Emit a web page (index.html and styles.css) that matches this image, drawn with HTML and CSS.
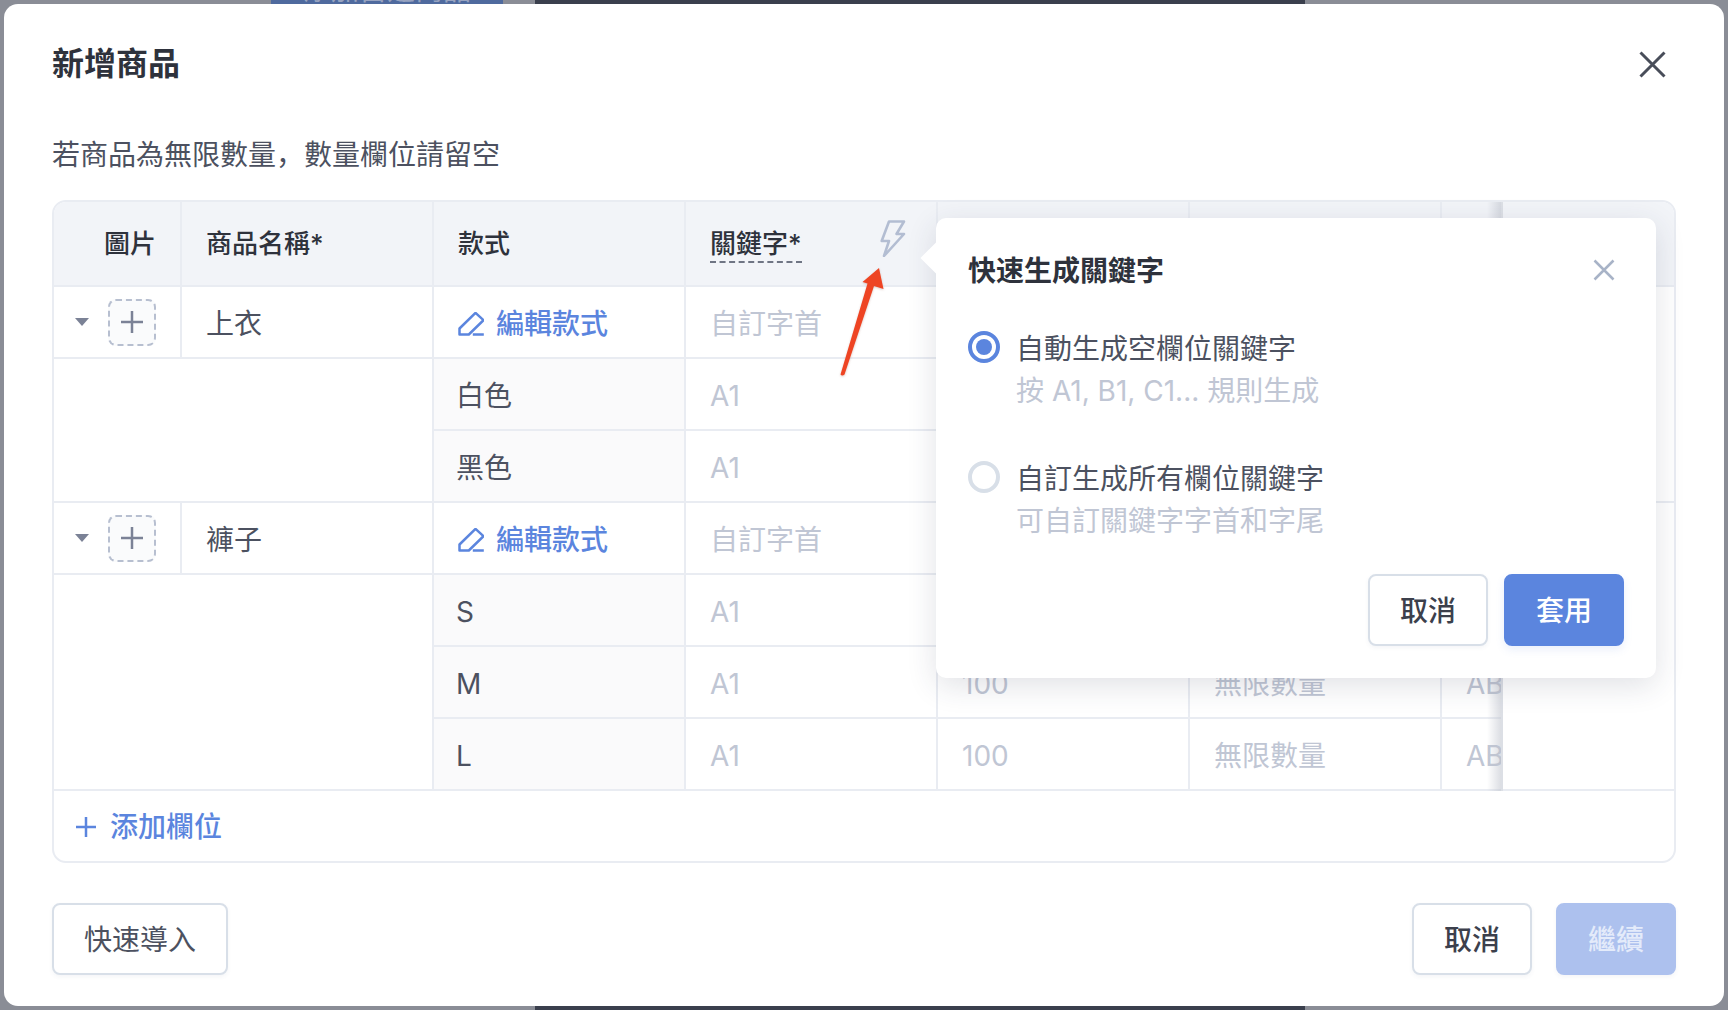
FILE: index.html
```html
<!DOCTYPE html>
<html lang="zh">
<head>
    <meta charset="UTF-8">
    <meta name="viewport" content="width=device-width, initial-scale=1.0">
    <title>新增商品</title>
    <link rel="stylesheet" href="styles.css">
</head>
<body>
    <div class="strip">
        <span class="strip-gray strip-gray-a"></span>
        <span class="strip-blue"><span class="strip-label">添加自選商品</span></span>
        <span class="strip-gray strip-gray-b"></span>
        <span class="strip-dark"></span>
        <span class="strip-gray strip-gray-c"></span>
    </div>

    <div class="page">
        <div class="modal">
            <div class="modal-head">
                <h1>新增商品</h1>
                <svg class="modal-close" viewBox="0 0 27 27"><path d="M1.5 1.5l24 24M25.5 1.5l-24 24"/></svg>
            </div>
            <p class="modal-tip">若商品為無限數量，數量欄位請留空</p>

            <div class="sheet">
                <div class="sheet-body">
                    <div class="sheet-scroll">
                        <table>
                            <colgroup>
                                <col class="col-pic">
                                <col span="6" class="col-std">
                            </colgroup>
                            <thead>
                                <tr>
                                    <th class="th-pic">圖片</th>
                                    <th>商品名稱*</th>
                                    <th>款式</th>
                                    <th>
                                        <div class="th-keyword">
                                            <span class="dashed">關鍵字*</span>
                                            <svg class="bolt" viewBox="0 0 26 38"><path d="M9 2.5h15l-7.5 12.500h7.500l-20 22 5-15h-7.300z"/></svg>
                                        </div>
                                    </th>
                                    <th></th>
                                    <th></th>
                                    <th></th>
                                </tr>
                            </thead>
                            <tbody>
                                <tr>
                                    <td>
                                        <div class="pic-cell">
                                            <span class="caret"></span>
                                            <span class="pic-add"><svg viewBox="0 0 24 24"><path d="M12 1v22M1 12h22"/></svg></span>
                                        </div>
                                    </td>
                                    <td>上衣</td>
                                    <td>
                                        <a class="edit-link">
                                            <svg viewBox="0 0 26 24"><path d="M1.500 22.500v-6l16-15.600 8 7.300-14.700 14.300zM14.800 22.500h11"/></svg>
                                            編輯款式
                                        </a>
                                    </td>
                                    <td class="muted">自訂字首</td>
                                    <td></td>
                                    <td></td>
                                    <td></td>
                                </tr>
                                <tr>
                                    <td colspan="2" rowspan="2" class="blank"></td>
                                    <td class="variant">白色</td>
                                    <td class="muted">A1</td>
                                    <td></td>
                                    <td></td>
                                    <td></td>
                                </tr>
                                <tr>
                                    <td class="variant">黑色</td>
                                    <td class="muted">A1</td>
                                    <td></td>
                                    <td></td>
                                    <td></td>
                                </tr>
                                <tr>
                                    <td>
                                        <div class="pic-cell">
                                            <span class="caret"></span>
                                            <span class="pic-add"><svg viewBox="0 0 24 24"><path d="M12 1v22M1 12h22"/></svg></span>
                                        </div>
                                    </td>
                                    <td>褲子</td>
                                    <td>
                                        <a class="edit-link">
                                            <svg viewBox="0 0 26 24"><path d="M1.500 22.500v-6l16-15.600 8 7.300-14.700 14.300zM14.800 22.500h11"/></svg>
                                            編輯款式
                                        </a>
                                    </td>
                                    <td class="muted">自訂字首</td>
                                    <td></td>
                                    <td></td>
                                    <td></td>
                                </tr>
                                <tr>
                                    <td colspan="2" rowspan="3" class="blank"></td>
                                    <td class="variant">S</td>
                                    <td class="muted">A1</td>
                                    <td></td>
                                    <td></td>
                                    <td></td>
                                </tr>
                                <tr>
                                    <td class="variant">M</td>
                                    <td class="muted">A1</td>
                                    <td class="muted">100</td>
                                    <td class="muted">無限數量</td>
                                    <td class="muted">ABC123</td>
                                </tr>
                                <tr>
                                    <td class="variant">L</td>
                                    <td class="muted">A1</td>
                                    <td class="muted">100</td>
                                    <td class="muted">無限數量</td>
                                    <td class="muted">ABC123</td>
                                </tr>
                            </tbody>
                        </table>
                    </div>
                    <div class="sheet-fixed">
                        <div class="fixed-head"></div>
                        <div class="fixed-group fixed-group-a"></div>
                        <div class="fixed-group fixed-group-b"></div>
                    </div>
                </div>
                <a class="add-row">
                    <svg viewBox="0 0 20 20"><path d="M10 0v20M0 10h20"/></svg>
                    添加欄位
                </a>
            </div>

            <div class="modal-foot">
                <button class="btn">快速導入</button>
                <div class="foot-right">
                    <button class="btn btn-small btn-strong">取消</button>
                    <button class="btn btn-small btn-disabled">繼續</button>
                </div>
            </div>

            <!-- 快速生成彈窗 -->
            <div class="popover">
                <div class="popover-head">
                    <h2>快速生成關鍵字</h2>
                    <svg class="popover-close" viewBox="0 0 22 22"><path d="M1.500 1.500l19 19M20.500 1.500l-19 19"/></svg>
                </div>
                <div class="option">
                    <span class="radio radio-on"></span>
                    <div>
                        <div class="option-title">自動生成空欄位關鍵字</div>
                        <div class="option-sub">按 A1, B1, C1... 規則生成</div>
                    </div>
                </div>
                <div class="option">
                    <span class="radio"></span>
                    <div>
                        <div class="option-title">自訂生成所有欄位關鍵字</div>
                        <div class="option-sub">可自訂關鍵字字首和字尾</div>
                    </div>
                </div>
                <div class="popover-foot">
                    <button class="btn btn-small btn-strong">取消</button>
                    <button class="btn btn-small btn-primary">套用</button>
                </div>
            </div>

            <!-- 標註箭頭 -->
            <svg class="callout" viewBox="0 0 60 120">
                <path class="callout-head" d="M41 2l4.500 21-9.500-3-29.500 88.500q-2.500 2-4 0l27-91-5-1.500z"/>
            </svg>
        </div>
    </div>

    <div class="strip">
        <span class="strip-gray strip-gray-a"></span>
        <span class="strip-gray strip-gray-d"></span>
        <span class="strip-gray strip-gray-b"></span>
        <span class="strip-dark"></span>
        <span class="strip-gray strip-gray-c"></span>
    </div>
</body>
</html>
```

FILE: styles.css
```css
:root {
    --primary-color: #5b85de;
    --disabled-color: #adc1ee;
    --text-color: #4c5160;
    --title-color: #2e323c;
    --muted-color: #c0c6d4;
    --line-color: #e9ecf2;
    --button-line: #d8dfe8;
    --head-background: #f2f4f8;
    --backdrop-color: #8a8d96;
}

* {
    box-sizing: border-box;
}

html,
body {
    margin: 0;
    height: 1010px;
    overflow: hidden;
}

body {
    display: flex;
    flex-direction: column;
    background: var(--backdrop-color);
    color: var(--text-color);
    font-family: "Inter", "Noto Sans CJK SC", sans-serif;
    font-size: 28px;
    line-height: 40px;
}

/* 彈窗後面露出的頁面邊緣 */
.strip {
    display: flex;
    flex: none;
    height: 4px;
    overflow: hidden;
}

.strip-gray-a {
    width: 271px;
}

.strip-blue {
    width: 232px;
    background: #4f6a9e;
    text-align: center;
}

.strip-gray-d {
    width: 232px;
}

.strip-label {
    display: block;
    margin-top: -30px;
    color: #97a3c0;
}

.strip-gray-b {
    width: 32px;
}

.strip-dark {
    width: 770px;
    background: #3a3f4d;
}

.strip-gray-c {
    flex: 1;
}

.page {
    flex: 1;
    padding: 0 4px;
}

.modal {
    position: relative;
    height: 1002px;
    padding: 38px 48px 0;
    background: #fff;
    border-radius: 14px;
}

.modal-head {
    display: flex;
    align-items: center;
    justify-content: space-between;
    height: 44px;
}

.modal-head h1 {
    margin: 0;
    color: var(--title-color);
    font-size: 32px;
    font-weight: 600;
    line-height: 44px;
}

.modal-close {
    width: 27px;
    height: 27px;
    margin-right: 10px;
    fill: none;
    stroke: #484d59;
    stroke-width: 3;
}

.modal-tip {
    margin: 49px 0 25px;
    line-height: 40px;
}

/* 商品表格 */
.sheet {
    height: 663px;
    border: 2px solid var(--line-color);
    border-radius: 14px;
    overflow: hidden;
}

.sheet-body {
    display: flex;
    height: 589px;
}

.sheet-scroll {
    position: relative;
    width: 1449px;
    overflow: hidden;
}

.sheet-scroll::after {
    content: '';
    position: absolute;
    top: 0;
    right: 0;
    bottom: 0;
    width: 16px;
    background: linear-gradient(90deg, rgba(190, 194, 204, 0), rgba(190, 194, 204, 0.55) 88%, #dcdfe5 88%);
}

table {
    width: 1640px;
    table-layout: fixed;
    border-collapse: separate;
    border-spacing: 0;
}

.col-pic {
    width: 128px;
}

.col-std {
    width: 252px;
}

th,
td {
    padding: 0 0 0 24px;
    border-right: 2px solid var(--line-color);
    border-bottom: 2px solid var(--line-color);
    text-align: left;
    white-space: nowrap;
    overflow: hidden;
}

th {
    height: 85px;
    background: var(--head-background);
    color: var(--title-color);
    font-size: 26px;
    font-weight: 500;
}

td {
    height: 72px;
    padding-top: 4px;
}

th.th-pic {
    padding-left: 50px;
}

.th-keyword {
    display: flex;
    align-items: flex-start;
    justify-content: space-between;
    padding-right: 30px;
}

.dashed {
    height: 38px;
    border-bottom: 2px dashed #6f7584;
    line-height: 38px;
}

.bolt {
    width: 26px;
    height: 38px;
    margin-top: -6px;
    fill: none;
    stroke: #b3bdd2;
    stroke-width: 2.600;
    stroke-linejoin: round;
}

td.blank {
    padding: 0;
}

td.variant {
    padding-left: 22px;
    background: #fafafb;
}

td.muted {
    color: var(--muted-color);
}

.pic-cell {
    display: flex;
    align-items: center;
    gap: 19px;
    margin: -4px 0 0 -3px;
}

.caret {
    width: 0;
    height: 0;
    border-top: 8px solid #7b8296;
    border-left: 7.500px solid transparent;
    border-right: 7.500px solid transparent;
}

.pic-add {
    display: flex;
    flex: none;
    align-items: center;
    justify-content: center;
    width: 48px;
    height: 47px;
    background: #fafbfc;
    border: 2px dashed #b7bfd0;
    border-radius: 8px;
}

.pic-add svg {
    width: 24px;
    height: 24px;
    fill: none;
    stroke: #7b8296;
    stroke-width: 2.500;
}

.edit-link {
    display: flex;
    align-items: center;
    gap: 12px;
    color: var(--primary-color);
    font-weight: 500;
}

.edit-link svg {
    width: 26px;
    height: 24px;
    fill: none;
    stroke: var(--primary-color);
    stroke-width: 2.500;
    stroke-linejoin: round;
}

.sheet-fixed {
    flex: 1;
}

.fixed-head {
    height: 85px;
    background: var(--head-background);
    border-bottom: 2px solid var(--line-color);
}

.fixed-group {
    border-bottom: 2px solid var(--line-color);
}

.fixed-group-a {
    height: 216px;
}

.fixed-group-b {
    height: 288px;
}

.add-row {
    display: flex;
    align-items: center;
    gap: 14px;
    height: 70px;
    padding: 1px 0 0 22px;
    color: var(--primary-color);
    font-weight: 500;
}

.add-row svg {
    width: 20px;
    height: 20px;
    fill: none;
    stroke: var(--primary-color);
    stroke-width: 2.500;
}

/* 按鈕 */
.modal-foot {
    display: flex;
    justify-content: space-between;
    margin-top: 40px;
}

.foot-right {
    display: flex;
    gap: 24px;
}

.btn {
    width: 176px;
    height: 72px;
    padding: 0 0 3px;
    background: #fff;
    border: 2px solid var(--button-line);
    border-radius: 8px;
    box-shadow: 0 2px 4px rgba(60, 80, 120, 0.06);
    color: var(--text-color);
    font-family: inherit;
    font-size: 28px;
}

.btn-small {
    width: 120px;
}

.btn-strong {
    color: #3c404c;
    font-weight: 500;
}

.btn-primary {
    background: var(--primary-color);
    border-color: var(--primary-color);
    box-shadow: 0 4px 8px rgba(91, 133, 222, 0.12);
    color: #fff;
    font-weight: 500;
}

.btn-disabled {
    background: var(--disabled-color);
    border-color: var(--disabled-color);
    color: #e4ebfa;
    font-weight: 500;
}

/* 快速生成彈窗 */
.popover {
    position: absolute;
    top: 214px;
    left: 932px;
    width: 720px;
    height: 460px;
    padding: 34px 32px 0;
    background: #fff;
    border-radius: 10px;
    box-shadow: 0 8px 30px rgba(40, 50, 80, 0.14);
}

.popover::before {
    content: '';
    position: absolute;
    top: 29px;
    left: -11px;
    width: 22px;
    height: 22px;
    background: #fff;
    transform: rotate(45deg);
}

.popover-head {
    position: relative;
    display: flex;
    align-items: center;
    justify-content: space-between;
    height: 40px;
    margin-bottom: 37px;
}

.popover-head h2 {
    margin: 0 0 2px;
    color: var(--title-color);
    font-size: 28px;
    font-weight: 600;
    line-height: 40px;
}

.popover-close {
    width: 22px;
    height: 22px;
    margin: 0 9px 4px 0;
    fill: none;
    stroke: #a8b3c7;
    stroke-width: 2.500;
}

.option {
    display: flex;
    gap: 16px;
    margin-bottom: 48px;
}

.option-title {
    line-height: 40px;
}

.option-sub {
    margin-top: 2px;
    color: var(--muted-color);
    line-height: 40px;
}

.radio {
    flex: none;
    width: 32px;
    height: 32px;
    margin-top: 2px;
    background: #fff;
    border: 4px solid #d8dfe8;
    border-radius: 50%;
}

.radio-on {
    padding: 4px;
    background: var(--primary-color);
    background-clip: content-box;
    border-color: var(--primary-color);
}

.popover-foot {
    display: flex;
    justify-content: flex-end;
    gap: 16px;
    margin-top: -15px;
}

/* 標註箭頭 */
.callout {
    position: absolute;
    top: 262px;
    left: 834px;
    width: 60px;
    height: 120px;
    filter: drop-shadow(0 1px 1px rgba(120, 40, 20, 0.25));
}

.callout-head {
    fill: #ee4423;
}
```
